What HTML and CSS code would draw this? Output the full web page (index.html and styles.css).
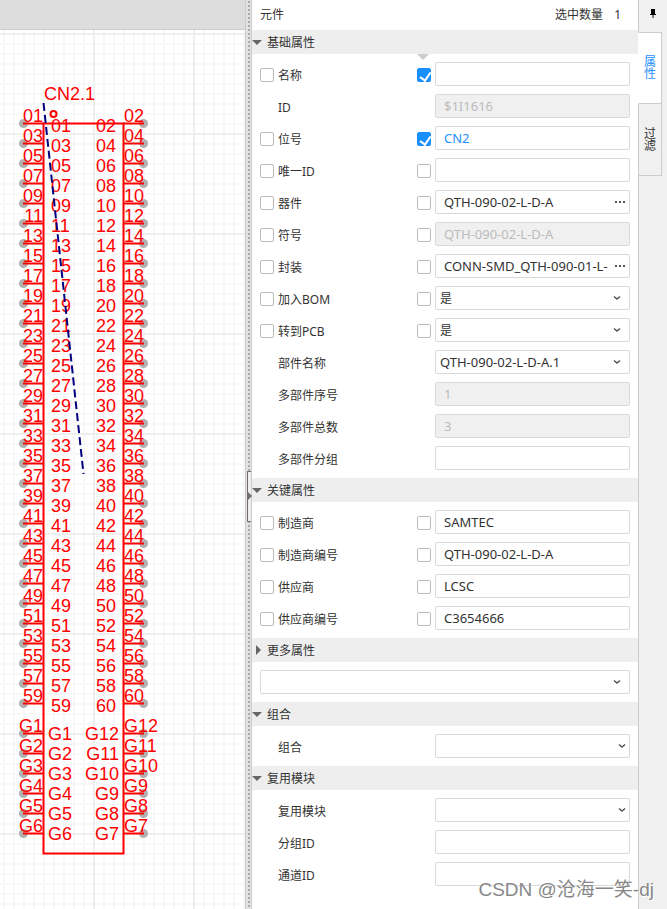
FILE: index.html
```html
<!DOCTYPE html>
<html lang="zh-CN">
<head>
  <meta charset="UTF-8">
  <title>元件属性</title>
  <meta name="viewport" content="width=device-width, initial-scale=1.0">
  <link rel="stylesheet" href="styles.css">
</head>
<body>
  <div class="app">

    <main class="editor">
      <div class="ruler"></div>
      <div class="canvas">
        <svg id="schematic" width="245" height="880" viewBox="0 29 245 880">
          <defs>
            <pattern id="grid" x="93" y="33" width="100" height="100" patternUnits="userSpaceOnUse">
              <path class="grid-minor" d="M0 11H100M0 21H100M0 31H100M0 41H100M0 51H100M0 61H100M0 71H100M0 81H100M0 91H100M11 0V100M21 0V100M31 0V100M41 0V100M51 0V100M61 0V100M71 0V100M81 0V100M91 0V100"/>
              <path class="grid-major" d="M0 1H100M1 0V100"/>
            </pattern>
          </defs>
          <rect y="29" width="245" height="880" fill="url(#grid)"/>
          <g id="pins"></g>
          <rect class="wire" x="43.5" y="123.5" width="80" height="730"/>
          <circle class="wire" cx="53.5" cy="114" r="3"/>
          <text x="44" y="100">CN2.1</text>
          <path class="link-line" d="M43.5 103L83.5 474"/>
        </svg>
      </div>
    </main>

    <div class="splitter"><button class="splitter-handle" aria-label="折叠面板"></button></div>

    <aside class="panel">
      <div class="panel-title">
        <span>元件</span>
        <span class="count">选中数量 <b>1</b></span>
      </div>

      <h2 class="section open">基础属性</h2>
      <div class="rows first">
        <div class="row"><input type="checkbox" id="c1"><label for="c1">名称</label><input type="checkbox" aria-label="显示名称" checked><input type="text" aria-label="名称"></div>
        <div class="row"><label for="f2">ID</label><input type="text" id="f2" value="$1I1616" disabled></div>
        <div class="row"><input type="checkbox" id="c3"><label for="c3">位号</label><input type="checkbox" aria-label="显示位号" checked><input type="text" class="active" aria-label="位号" value="CN2"></div>
        <div class="row"><input type="checkbox" id="c4"><label for="c4">唯一ID</label><input type="checkbox" aria-label="显示唯一ID"><input type="text" aria-label="唯一ID"></div>
        <div class="row"><input type="checkbox" id="c5"><label for="c5">器件</label><input type="checkbox" aria-label="显示器件"><div class="picker"><input type="text" aria-label="器件" value="QTH-090-02-L-D-A"><button aria-label="选择器件"><i></i><i></i><i></i></button></div></div>
        <div class="row"><input type="checkbox" id="c6"><label for="c6">符号</label><input type="checkbox" aria-label="显示符号"><input type="text" aria-label="符号" value="QTH-090-02-L-D-A" disabled></div>
        <div class="row"><input type="checkbox" id="c7"><label for="c7">封装</label><input type="checkbox" aria-label="显示封装"><div class="picker"><input type="text" aria-label="封装" value="CONN-SMD_QTH-090-01-L-"><button aria-label="选择封装"><i></i><i></i><i></i></button></div></div>
        <div class="row"><input type="checkbox" id="c8"><label for="c8">加入BOM</label><input type="checkbox" aria-label="显示加入BOM"><div class="select"><select aria-label="加入BOM"><option>是</option><option>否</option></select><svg viewBox="0 0 8 6"><path d="M1 1.5L4 4L7 1.5"/></svg></div></div>
        <div class="row"><input type="checkbox" id="c9"><label for="c9">转到PCB</label><input type="checkbox" aria-label="显示转到PCB"><div class="select"><select aria-label="转到PCB"><option>是</option><option>否</option></select><svg viewBox="0 0 8 6"><path d="M1 1.5L4 4L7 1.5"/></svg></div></div>
        <div class="row"><label for="f10">部件名称</label><div class="select"><select id="f10" class="latin"><option>QTH-090-02-L-D-A.1</option></select><svg viewBox="0 0 8 6"><path d="M1 1.5L4 4L7 1.5"/></svg></div></div>
        <div class="row"><label for="f11">多部件序号</label><input type="text" id="f11" value="1" disabled></div>
        <div class="row"><label for="f12">多部件总数</label><input type="text" id="f12" value="3" disabled></div>
        <div class="row"><label for="f13">多部件分组</label><input type="text" id="f13"></div>
      </div>

      <h2 class="section open">关键属性</h2>
      <div class="rows">
        <div class="row"><input type="checkbox" id="c14"><label for="c14">制造商</label><input type="checkbox" aria-label="显示制造商"><input type="text" aria-label="制造商" value="SAMTEC"></div>
        <div class="row"><input type="checkbox" id="c15"><label for="c15">制造商编号</label><input type="checkbox" aria-label="显示制造商编号"><input type="text" aria-label="制造商编号" value="QTH-090-02-L-D-A"></div>
        <div class="row"><input type="checkbox" id="c16"><label for="c16">供应商</label><input type="checkbox" aria-label="显示供应商"><input type="text" aria-label="供应商" value="LCSC"></div>
        <div class="row"><input type="checkbox" id="c17"><label for="c17">供应商编号</label><input type="checkbox" aria-label="显示供应商编号"><input type="text" aria-label="供应商编号" value="C3654666"></div>
      </div>

      <h2 class="section">更多属性</h2>
      <div class="rows">
        <div class="select"><select aria-label="更多属性"><option></option></select><svg viewBox="0 0 8 6"><path d="M1 1.5L4 4L7 1.5"/></svg></div>
      </div>

      <h2 class="section open">组合</h2>
      <div class="rows">
        <div class="row"><label for="f18">组合</label><div class="select combo"><select id="f18"><option></option></select><svg viewBox="0 0 8 6"><path d="M1 1.5L4 4L7 1.5"/></svg></div></div>
      </div>

      <h2 class="section open">复用模块</h2>
      <div class="rows">
        <div class="row"><label for="f19">复用模块</label><div class="select combo"><select id="f19"><option></option></select><svg viewBox="0 0 8 6"><path d="M1 1.5L4 4L7 1.5"/></svg></div></div>
        <div class="row"><label for="f20">分组ID</label><input type="text" id="f20"></div>
        <div class="row"><label for="f21">通道ID</label><input type="text" id="f21"></div>
      </div>
    </aside>

    <nav class="tabs">
      <button class="pin" aria-label="固定面板"><svg width="8" height="10" viewBox="0 0 8 10"><path d="M2 0H6V5H7V6H4.5V9H3.5V6H1V5H2Z"/></svg></button>
      <button class="tab current">属性</button>
      <button class="tab">过滤</button>
    </nav>

    <div class="watermark">CSDN @沧海一笑-dj</div>
  </div>
  <script src="pins.js"></script>
</body>
</html>
```

FILE: styles.css
```css
* {
  box-sizing: border-box;
}

body {
  margin: 0;
  color: #333;
  background: #fff;
  font-family: "Noto Sans", "Noto Sans CJK SC", sans-serif;
  font-size: 12px;
}

button, input, select {
  font: inherit;
  color: inherit;
  margin: 0;
}

.app {
  position: relative;
  display: flex;
  min-height: 100vh;
}

/* schematic */
.editor {
  flex: 1;
  min-width: 0;
  border-right: 1px solid #ccc;
}

.ruler {
  height: 30px;
  background: #ddd;
  border-bottom: 1px solid #ccc;
}

.canvas {
  overflow: hidden;
}

#schematic {
  display: block;
  margin-top: -1px;
  height: 880px;
  font-family: "Liberation Sans", Arial, sans-serif;
  font-size: 18px;
  fill: #f00;
}

.grid-minor, .grid-major {
  fill: none;
  stroke: #f8f8f8;
  stroke-width: 2;
}

.grid-major {
  stroke: #efefef;
}

.wire {
  fill: none;
  stroke: #f00;
  stroke-width: 2;
}

.pin-dot {
  fill: #b0b0b0;
}

.link-line {
  fill: none;
  stroke: #000080;
  stroke-width: 2;
  stroke-dasharray: 8 4;
}

/* splitter */
.splitter {
  display: flex;
  align-items: center;
  justify-content: flex-end;
  width: 6px;
  background: radial-gradient(circle at 2px 2px, #aaa 1px, transparent 1px) 1px 0 / 4px 4px repeat-y #e2e2e2;
  border-right: 1px solid #ccc;
}

.splitter-handle {
  position: relative;
  width: 4px;
  height: 51px;
  margin-top: 84px;
  padding: 0;
  background: #eee;
  border: 1px solid #776c6c;
  border-right: 0;
}

.splitter-handle::after {
  content: "";
  position: absolute;
  top: 20px;
  left: 0;
  border: 4px solid transparent;
  border-left-color: #776c6c;
  border-right: 0;
}

/* property panel */
.panel {
  width: 387px;
  border-right: 1px solid #ccc;
}

.panel-title {
  display: flex;
  justify-content: space-between;
  padding: 0 17px 0 8px;
  line-height: 30px;
}

.count b {
  margin-left: 8px;
  font-weight: normal;
}

.section {
  display: flex;
  align-items: center;
  gap: 5px;
  height: 24px;
  margin: 0;
  background: #eee;
  font-size: 12px;
  font-weight: normal;
}

.section::before {
  content: "";
  width: 0;
  margin: 0 1px 0 4px;
  border: 5px solid transparent;
  border-left-color: #666;
  border-right: 0;
}

.section.open::before {
  margin: 0;
  border: 5px solid transparent;
  border-top-color: #666;
  border-bottom: 0;
}

.rows {
  display: grid;
  gap: 8px;
  padding: 8px;
}

.rows.first {
  position: relative;
}

.rows.first::before {
  content: "";
  position: absolute;
  top: 0;
  right: 209px;
  border: 6px solid transparent;
  border-top-color: #ccc;
  border-bottom: 0;
}

.row {
  display: grid;
  grid-template-columns: 18px 1fr 18px 195px;
  align-items: center;
  height: 24px;
}

.row label {
  grid-column: 2;
}

.row label,
.row input[type="checkbox"] {
  margin-top: 2px;
}

.row > input[type="text"],
.row > .select,
.row > .picker {
  grid-column: 4;
}

input[type="text"], select {
  width: 100%;
  height: 24px;
  padding: 0 8px;
  background: #fff;
  border: 1px solid #d9d9d9;
  border-radius: 2px;
}

input[type="text"], select.latin {
  font-size: 13px;
}

input[type="text"]:disabled {
  background: #f0f0f0;
  color: #bbb;
}

input.active {
  color: #1e90ff;
}

input[type="checkbox"] {
  appearance: none;
  width: 14px;
  height: 14px;
  background: #fff;
  border: 1px solid #bbb;
  border-radius: 2px;
}

input[type="checkbox"]:checked {
  position: relative;
  background: #1890ff;
  border-color: #1890ff;
}

input[type="checkbox"]:checked::after {
  content: "";
  position: absolute;
  top: 1px;
  left: 4px;
  width: 5px;
  height: 9px;
  border: solid #fff;
  border-width: 0 2px 2px 0;
  transform: rotate(35deg);
}

.picker, .select {
  position: relative;
}

.picker input[type="text"] {
  padding-right: 20px;
}

.picker button {
  position: absolute;
  top: 2px;
  right: 2px;
  display: flex;
  gap: 2px;
  align-items: center;
  height: 20px;
  padding: 0 3px;
  background: none;
  border: 0;
}

.picker i {
  width: 2px;
  height: 2px;
  background: #555;
}

.select select {
  appearance: none;
  padding: 0 4px;
}

.select svg {
  position: absolute;
  top: 9px;
  right: 9px;
  width: 8px;
  height: 6px;
  fill: none;
  stroke: #555;
  stroke-width: 1.5;
  pointer-events: none;
}

.select.combo svg {
  right: 4px;
}

/* side tabs */
.tabs {
  display: flex;
  flex-direction: column;
  align-items: flex-start;
  width: 28px;
  background: #f0f0f0;
}

.pin {
  align-self: stretch;
  height: 32px;
  padding: 0 0 3px;
  background: none;
  border: 0;
}

.tab {
  width: 24px;
  height: 72px;
  margin-left: -1px;
  padding: 0 5px;
  background: #f0f0f0;
  border: 1px solid #ccc;
  border-top: 0;
  line-height: 12px;
}

.tab.current {
  background: #fff;
  color: #1e90ff;
  border-top: 1px solid #ccc;
  border-left-color: #fff;
}

.watermark {
  position: absolute;
  right: 13px;
  bottom: 6px;
  color: #888;
  font-family: "Liberation Sans", "Noto Sans CJK SC", sans-serif;
  font-size: 19px;
  line-height: 26px;
  text-shadow: 1px 1px 0 #fff;
}
```

FILE: pins.js
```js
const PITCH = 20;
const svgNS = "http://www.w3.org/2000/svg";
const pins = document.getElementById("pins");

function add(tag, attrs, text) {
  const el = document.createElementNS(svgNS, tag);
  for (const key in attrs) el.setAttribute(key, attrs[key]);
  if (text) el.textContent = text;
  pins.appendChild(el);
}

// one row has a pin on each side of the body
function drawRow(y, left, right, inset, drop) {
  add("circle", { class: "pin-dot", cx: 23.5, cy: y, r: 4.5 });
  add("circle", { class: "pin-dot", cx: 143.5, cy: y, r: 4.5 });
  add("path", { class: "wire", d: `M23 ${y}H44M123 ${y}H144` });
  add("text", { x: 43, y: y - 1.5, "text-anchor": "end" }, left);
  add("text", { x: 124, y: y - 1.5 }, right);
  add("text", { x: 44 + inset, y: y + drop }, left);
  add("text", { x: 123 - inset, y: y + drop, "text-anchor": "end" }, right);
}

for (let i = 0; i < 30; i++) {
  const n = i * 2 + 1;
  drawRow(123.5 + i * PITCH, String(n).padStart(2, "0"), String(n + 1).padStart(2, "0"), 7, 8.5);
}

for (let i = 0; i < 6; i++) {
  drawRow(733.5 + i * PITCH, "G" + (i + 1), "G" + (12 - i), 4, 6.5);
}
```
